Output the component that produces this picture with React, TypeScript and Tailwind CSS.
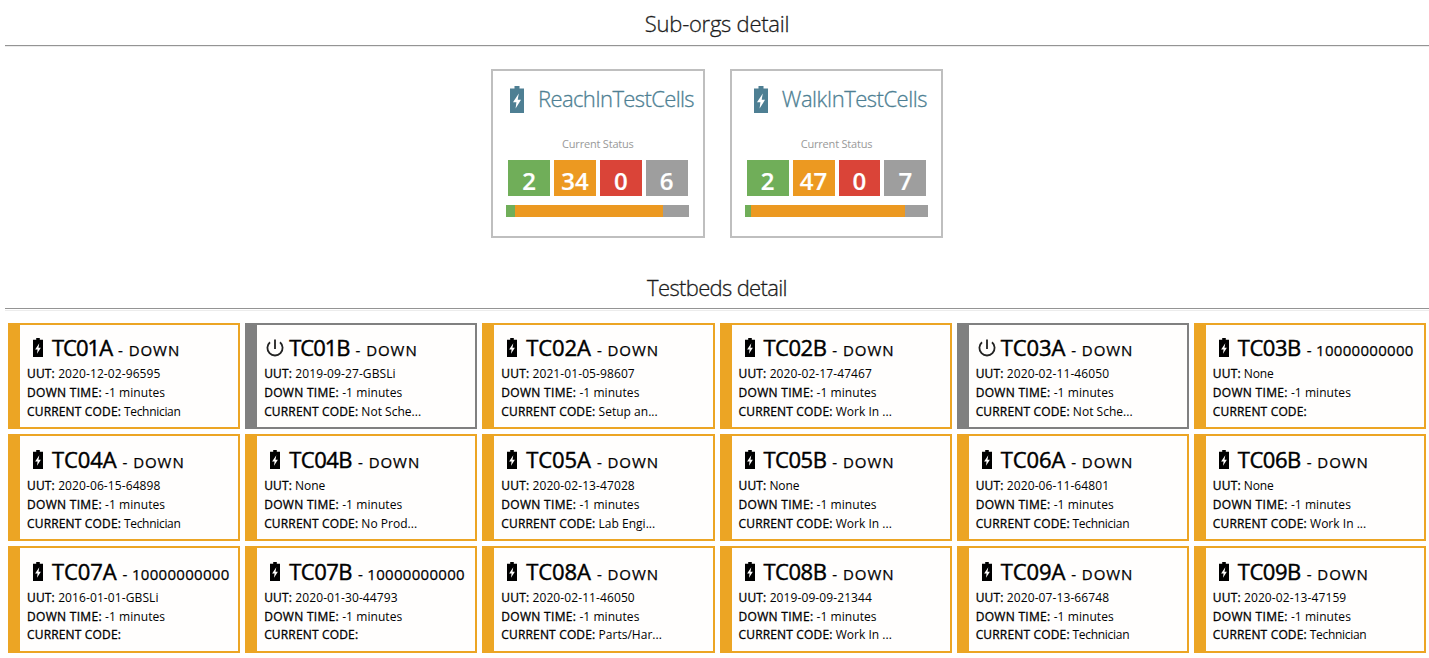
type Org = { name: string; counts: number[]; bar: number[]; tracking: string; gap: string };
type Bed = [name: string, status: string, uut: string, code: string, off?: boolean];

const orgs: Org[] = [
  { name: "ReachInTestCells", counts: [2, 34, 0, 6], bar: [9, 148, 26], tracking: "tracking-[-0.63px]", gap: "pl-[17px]" },
  { name: "WalkInTestCells", counts: [2, 47, 0, 7], bar: [6, 154, 23], tracking: "tracking-[-0.5px]", gap: "pl-[22px]" },
];

const beds: Bed[] = [
  ["TC01A", "DOWN", "2020-12-02-96595", "Technician"],
  ["TC01B", "DOWN", "2019-09-27-GBSLi", "Not Sche...", true],
  ["TC02A", "DOWN", "2021-01-05-98607", "Setup an..."],
  ["TC02B", "DOWN", "2020-02-17-47467", "Work In ..."],
  ["TC03A", "DOWN", "2020-02-11-46050", "Not Sche...", true],
  ["TC03B", "10000000000", "None", ""],
  ["TC04A", "DOWN", "2020-06-15-64898", "Technician"],
  ["TC04B", "DOWN", "None", "No Prod..."],
  ["TC05A", "DOWN", "2020-02-13-47028", "Lab Engi..."],
  ["TC05B", "DOWN", "None", "Work In ..."],
  ["TC06A", "DOWN", "2020-06-11-64801", "Technician"],
  ["TC06B", "DOWN", "None", "Work In ..."],
  ["TC07A", "10000000000", "2016-01-01-GBSLi", ""],
  ["TC07B", "10000000000", "2020-01-30-44793", ""],
  ["TC08A", "DOWN", "2020-02-11-46050", "Parts/Har..."],
  ["TC08B", "DOWN", "2019-09-09-21344", "Work In ..."],
  ["TC09A", "DOWN", "2020-07-13-66748", "Technician"],
  ["TC09B", "DOWN", "2020-02-13-47159", "Technician"],
];

const tileColors = ["bg-[#70ae59]", "bg-[#ec9921]", "bg-[#da4438]", "bg-[#9e9e9e]"];
const barColors = ["bg-[#70ae59]", "bg-[#ec9921]", "bg-[#9e9e9e]"];

function Battery({ className }: { className: string }) {
  return (
    <svg viewBox="0 0 14 27" preserveAspectRatio="none" fill="currentColor" className={className}>
      <path fillRule="evenodd" d="M4.5 0h5v2.5H14V27H0V2.5h4.5zM8.8 7.5 3 16.2h3.4L5.6 22.5 11 13.8H7.7z" />
    </svg>
  );
}

function Power() {
  return (
    <svg viewBox="0 0 18 18" fill="none" stroke="#222" strokeWidth="1.8" className="mt-[14px] ml-[9px] h-[18px] w-[18px] shrink-0">
      <path d="M9 0.5v9.5M4 3.2a7.6 7.6 0 1 0 10 0" />
    </svg>
  );
}

function Heading({ text, tracking, rule }: { text: string; tracking: string; rule: string }) {
  return (
    <>
      <h2 className={`pl-[5px] text-center text-[22px] leading-[47px] font-light text-[#1c1c1c] [-webkit-text-stroke:0.3px] ${tracking}`}>{text}</h2>
      <div className={`ml-[5px] border-t border-b border-t-[#949494] border-b-[#ececec] ${rule}`} />
    </>
  );
}

function OrgCard({ org }: { org: Org }) {
  return (
    <div className="flex h-[169px] w-[213.5px] flex-col border-2 border-[#bfbfbf] bg-white">
      <div className={`flex h-[58px] ${org.gap} text-[#4e7f93]`}>
        <Battery className="mt-[15px] h-[27px] w-[14px] shrink-0" />
        <span className={`ml-[14px] text-[22px] leading-[55px] font-light whitespace-nowrap [-webkit-text-stroke:0.3px] ${org.tracking}`}>{org.name}</span>
      </div>
      <div className="mt-[5px] h-[26px] text-center text-[11px] leading-[20px] tracking-[-0.2px] text-[#999]">Current Status</div>
      <div className="mr-[15px] ml-[15px] grid h-[36px] grid-cols-4 gap-1">
        {org.counts.map((n, i) => (
          <div key={i} className={`h-[36px] text-center text-[24px] leading-[41px] font-semibold text-white [-webkit-text-stroke:0.2px] ${tileColors[i]}`}>{n}</div>
        ))}
      </div>
      <div className="mr-[13.5px] ml-[13px] mt-[9px] flex h-3">
        {org.bar.map((n, i) => (
          <div key={i} className={barColors[i]} style={{ flexGrow: n, flexBasis: 0 }} />
        ))}
      </div>
    </div>
  );
}

function Row({ label, value, tracking }: { label: string; value: string; tracking: string }) {
  return (
    <div className="h-[19px] text-[12px] leading-[19px] whitespace-pre">
      <span className={`[-webkit-text-stroke:0.3px] ${label === "DOWN TIME" ? "tracking-[0.3px]" : "tracking-[0.16px]"}`}>{label}:</span>
      <span className={tracking}> {value}</span>
    </div>
  );
}

function BedCard({ bed, index }: { bed: Bed; index: number }) {
  const [name, status, uut, code, off] = bed;
  const nameTracking = name.startsWith("TC01") ? "tracking-[-1px]" : name.endsWith("A") ? "tracking-[-0.1px]" : "tracking-[-0.5px]";
  const codeTracking = code.endsWith("...") ? "tracking-[0.02px]" : "tracking-[-0.3px]";
  return (
    <div className={`overflow-hidden border-2 border-l-[12px] bg-[#fffefd] text-black ${index < 6 ? "" : "pt-px"} ${off ? "border-[#808080]" : "border-[#eca524]"}`}>
      <div className="flex h-[39px] whitespace-nowrap">
        {off ? <Power /> : <Battery className="mt-[13px] ml-[13px] h-[19px] w-[10px] shrink-0" />}
        <span className={`text-[22px] leading-[45px] [-webkit-text-stroke:0.45px] ${nameTracking} ${off ? "ml-[5px]" : "ml-[9px]"}`}>{name}</span>
        <span className={`ml-[6px] text-[15px] leading-[50px] [-webkit-text-stroke:0.25px] ${status === "DOWN" ? "tracking-[0.95px]" : "tracking-[0.3px]"}`}>- {status}</span>
      </div>
      <div className="pl-[7px]">
        <Row label="UUT" value={uut} tracking={uut === "None" ? "tracking-[-0.1px]" : "tracking-[0.1px]"} />
        <Row label="DOWN TIME" value="-1 minutes" tracking="tracking-[0.06px]" />
        <div className={index < 12 ? "" : "-mt-px"}>
          <Row label="CURRENT CODE" value={code} tracking={codeTracking} />
        </div>
      </div>
    </div>
  );
}

export default function App() {
  return (
    <div className="h-[658px] w-[1429px] overflow-hidden bg-white font-['Open_Sans',sans-serif]">
      <Heading text="Sub-orgs detail" tracking="h-[45px] tracking-[-0.25px]" rule="h-[2px]" />
      <div className="flex h-[217px] gap-[25.2px] pt-[22px] pl-[491.1px]">
        {orgs.map((o) => <OrgCard key={o.name} org={o} />)}
      </div>
      <Heading text="Testbeds detail" tracking="h-[44px] tracking-[-0.65px]" rule="h-[3px]" />
      <div className="mt-[12px] mr-[3px] ml-[8px] grid grid-cols-6 grid-rows-[106px_107px_107px] gap-[5px]">
        {beds.map((b, i) => <BedCard key={b[0]} bed={b} index={i} />)}
      </div>
    </div>
  );
}
